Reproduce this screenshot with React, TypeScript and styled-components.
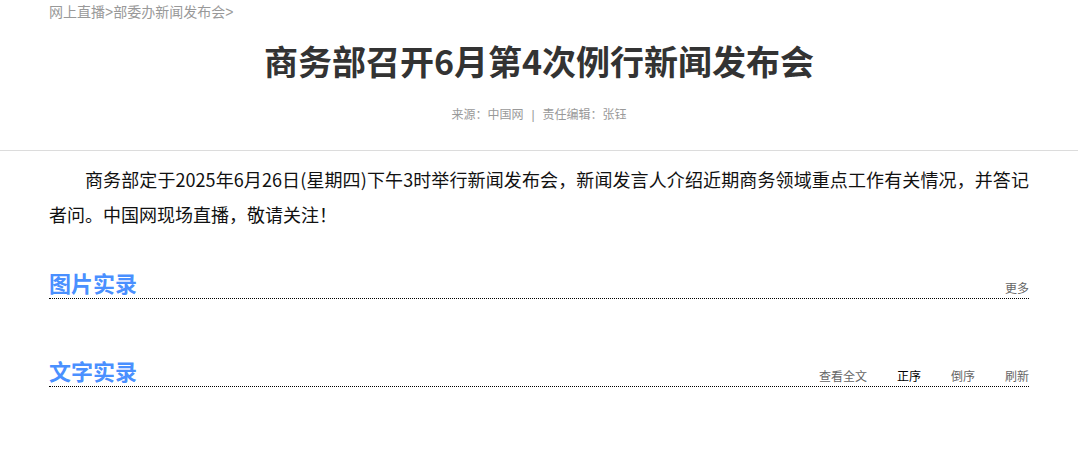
import styled, { createGlobalStyle } from 'styled-components';

const GlobalStyle = createGlobalStyle`
  html, body {
    margin: 0;
    padding: 0;
    background: #fff;
  }
  body {
    font-family: "Liberation Sans", "Noto Sans CJK SC", sans-serif;
    color: #333;
  }
`;

const Page = styled.div`
  width: 100%;
`;

const Header = styled.div`
  border-bottom: 1px solid #dcdcdc;
  padding-bottom: 25px;
`;

const Container = styled.div`
  width: 980px;
  margin: 0 auto;
`;

const Breadcrumb = styled.div`
  font-size: 14px;
  line-height: 20px;
  padding-top: 2px;
  color: #999;

  a {
    color: #999;
    text-decoration: none;
  }
`;

const Title = styled.h1`
  margin: 17px 0 0;
  text-align: center;
  font-family: "Noto Sans CJK SC", sans-serif;
  font-size: 34px;
  line-height: 44px;
  font-weight: 700;
  color: #333;
`;

const Meta = styled.div`
  margin-top: 22px;
  text-align: center;
  font-size: 12px;
  line-height: 20px;
  color: #999;

  span {
    margin: 0 8px;
  }
`;

const Intro = styled.p`
  margin: 11px 0 0;
  font-family: "Noto Sans CJK SC", sans-serif;
  font-size: 18px;
  line-height: 35px;
  text-indent: 2em;
  text-align: justify;
  color: #111;
`;

const Section = styled.div<{ $gap: number }>`
  margin-top: ${(p) => p.$gap}px;
`;

const SectionHead = styled.div`
  display: flex;
  justify-content: space-between;
  align-items: flex-end;
  border-bottom: 1px dotted #000;
  padding-bottom: 3px;
`;

const SectionTitle = styled.h2`
  margin: 0;
  font-family: "Noto Sans CJK SC", sans-serif;
  font-size: 22px;
  line-height: 26px;
  font-weight: 700;
  color: #4a90ff;
`;

const Links = styled.div`
  display: flex;
  gap: 30px;
  font-size: 12px;
  line-height: 14px;
  margin-bottom: -1px;
`;

const LinkItem = styled.a<{ $active?: boolean }>`
  color: ${(p) => (p.$active ? '#000' : '#666')};
  text-decoration: none;
  cursor: pointer;
`;

const App = () => {
  return (
    <Page>
      <GlobalStyle />
      <Header>
        <Container>
          <Breadcrumb>
            <a href="#">网上直播</a>&gt;<a href="#">部委办新闻发布会</a>&gt;
          </Breadcrumb>
          <Title>商务部召开6月第4次例行新闻发布会</Title>
          <Meta>
            来源：中国网<span>|</span>责任编辑：张钰
          </Meta>
        </Container>
      </Header>
      <Container>
        <Intro>
          商务部定于2025年6月26日(星期四)下午3时举行新闻发布会，新闻发言人介绍近期商务领域重点工作有关情况，并答记者问。中国网现场直播，敬请关注！
        </Intro>
        <Section $gap={37}>
          <SectionHead>
            <SectionTitle>图片实录</SectionTitle>
            <Links>
              <LinkItem>更多</LinkItem>
            </Links>
          </SectionHead>
        </Section>
        <Section $gap={58}>
          <SectionHead>
            <SectionTitle>文字实录</SectionTitle>
            <Links>
              <LinkItem>查看全文</LinkItem>
              <LinkItem $active>正序</LinkItem>
              <LinkItem>倒序</LinkItem>
              <LinkItem>刷新</LinkItem>
            </Links>
          </SectionHead>
        </Section>
      </Container>
    </Page>
  );
};

export default App;
